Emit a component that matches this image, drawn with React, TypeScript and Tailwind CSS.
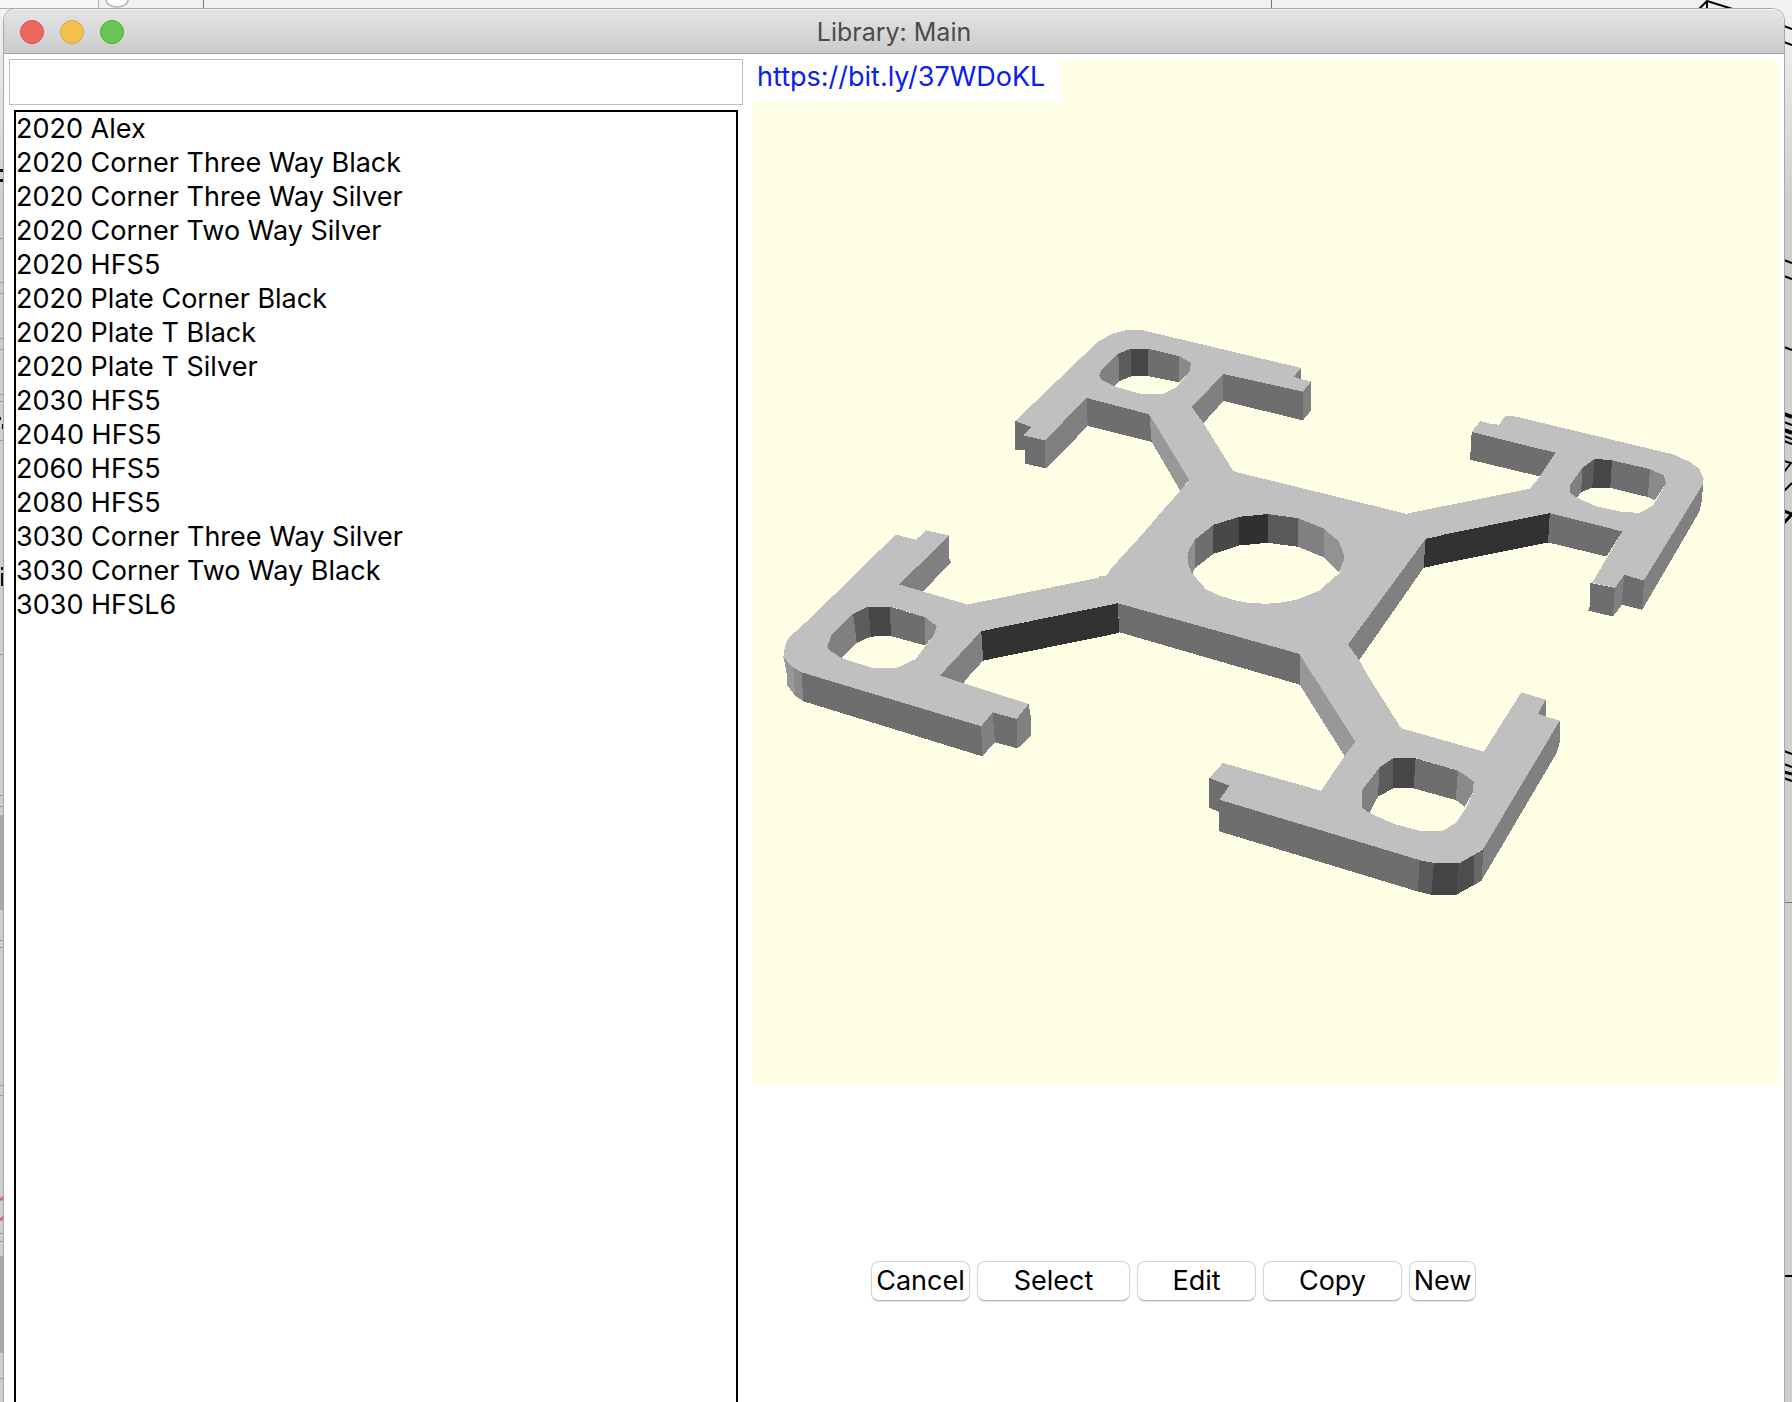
import React from "react";

const parts = [
  "2020 Alex",
  "2020 Corner Three Way Black",
  "2020 Corner Three Way Silver",
  "2020 Corner Two Way Silver",
  "2020 HFS5",
  "2020 Plate Corner Black",
  "2020 Plate T Black",
  "2020 Plate T Silver",
  "2030 HFS5",
  "2040 HFS5",
  "2060 HFS5",
  "2080 HFS5",
  "3030 Corner Three Way Silver",
  "3030 Corner Two Way Black",
  "3030 HFSL6",
];

type Face = [fill: string, points: string];

interface Section {
  name: string;
  transform: string;
  top: string;
  sides: Face[];
  hole: string;
  walls: Face[];
}

const sections: Section[] = [
  {
    name: "upper-left arm",
    transform: "translate(246 250) scale(0.33333)",
    top: "48,332 295,95 340,70 380,60 430,60 905,173 882,200 935,214 910,244 672,191 577,290 612,338 700,480 710,486 1020,564 1020,780 330,780 430,670 490,600 543,542 570,510 450,312 262,263 137,390 72,375 97,350",
    sides: [
      ["#808080", "905,173 905,206 882,200"],
      ["#6e6e6e", "672,191 910,244 910,330 672,272"],
      ["#808080", "910,244 935,214 935,300 910,330"],
      ["#808080", "672,191 672,272 612,338 577,290"],
      ["#6e6e6e", "48,332 97,350 72,375 137,390 137,473 78,460 78,420 48,418"],
      ["#808080", "137,390 262,263 265,347 143,473 137,473"],
      ["#6e6e6e", "262,263 450,312 457,395 265,347"],
      ["#989898", "450,312 570,507 543,542 457,395"],
    ],
    hole: "300,195 305,180 357,130 395,115 445,115 540,138 575,158 570,185 530,232 490,252 430,252 350,230 305,208",
    walls: [
      ["#808080", "300,195 305,180 357,130 360,212 345,228 305,208"],
      ["#5c5c5c", "357,130 395,115 397,198 360,212"],
      ["#464646", "395,115 445,115 445,197 395,198"],
      ["#6e6e6e", "445,115 540,138 540,216 445,197"],
      ["#8a8a8a", "540,138 575,158 570,185 540,216"],
    ],
  },
  {
    name: "upper-right arm",
    transform: "translate(686 330) scale(0.33333)",
    top: "-6,351 270,295 295,265 347,187 96,125 122,92 150,100 178,103 195,78 225,78 700,192 750,215 778,235 791,265 790,280 612,570 553,553 525,592 457,577 547,423 330,368 -6,436",
    sides: [
      ["#6e6e6e", "96,125 347,187 300,258 91,208"],
      ["#323232", "-6,436 330,368 325,456 -6,522"],
      ["#6e6e6e", "330,368 547,423 500,498 325,456"],
      ["#6e6e6e", "451,577 525,592 519,678 445,660 451,645"],
      ["#808080", "525,592 553,553 547,642 519,678"],
      ["#6e6e6e", "553,553 612,570 607,658 545,642"],
      ["#808080", "612,570 790,280 785,335 778,365 607,658"],
    ],
    hole: "390,285 428,232 465,205 515,210 630,236 672,255 678,280 640,345 600,367 550,365 470,348 412,322 392,308",
    walls: [
      ["#808080", "390,285 428,232 424,305 412,322 392,308"],
      ["#5c5c5c", "428,232 465,205 457,292 424,305"],
      ["#464646", "465,205 517,210 511,292 457,292"],
      ["#6e6e6e", "517,210 630,236 624,320 511,292"],
      ["#8a8a8a", "630,236 672,255 678,280 645,330 624,320"],
    ],
  },
  {
    name: "lower-left arm",
    transform: "translate(16 450) scale(0.33333)",
    top: "43,440 48,405 60,380 100,345 245,205 380,72 440,88 472,60 540,75 390,222 595,282 1010,197 1080,130 1080,287 1043,278 636,362 512,495 778,580 742,625 670,605 636,647 97,485 72,470",
    sides: [
      ["#808080", "540,75 540,145 545,155 460,245 390,222"],
      ["#989898", "43,440 72,468 78,555 55,525 52,480"],
      ["#8a8a8a", "72,468 97,485 103,572 78,555"],
      ["#6e6e6e", "97,485 636,647 639,737 103,572"],
      ["#808080", "636,647 670,605 677,695 639,737"],
      ["#6e6e6e", "670,605 742,625 745,713 677,695"],
      ["#808080", "742,625 778,580 785,620 785,675 745,713"],
      ["#808080", "512,495 636,362 642,450 600,495 580,521"],
      ["#323232", "636,362 1045,278 1050,367 642,450"],
    ],
    hole: "175,408 187,375 252,310 298,288 365,288 467,320 503,347 495,372 440,445 380,473 310,472 218,443 180,418",
    walls: [
      ["#808080", "175,408 187,375 252,310 263,397 218,443 180,418"],
      ["#5c5c5c", "252,310 298,288 305,378 263,397"],
      ["#464646", "298,288 362,288 366,377 305,378"],
      ["#6e6e6e", "362,288 467,320 470,405 366,377"],
      ["#8a8a8a", "467,320 503,347 495,372 468,405"],
    ],
  },
  {
    name: "lower-right arm",
    transform: "translate(436 610) scale(0.33333)",
    top: "330,-50 480,-70 508,-33 525,0 635,173 882,243 995,65 1068,87 1044,130 1110,150 880,535 852,553 810,577 720,575 690,568 90,387 120,345 60,322 100,277 395,360 465,256 497,213",
    sides: [
      ["#808080", "1068,87 1068,137 1044,130"],
      ["#808080", "1110,150 1110,215 1100,248 875,630 880,535"],
      ["#686868", "882,535 875,630 852,643 852,553"],
      ["#4e4e4e", "852,553 805,577 800,672 852,643"],
      ["#444444", "733,575 805,577 800,672 725,672"],
      ["#5a5a5a", "690,568 733,575 725,672 684,662"],
      ["#6e6e6e", "90,387 690,568 684,662 90,482"],
      ["#6e6e6e", "60,322 120,345 90,387 90,424 60,412"],
      ["#989898", "330,-54 340,-54 500,213 465,256 330,42"],
    ],
    hole: "516,360 570,290 610,263 680,263 805,300 852,332 850,365 830,410 800,455 760,480 690,480 615,460 540,427 516,410",
    walls: [
      ["#808080", "516,360 570,290 565,378 540,427 516,410"],
      ["#5c5c5c", "570,290 610,263 610,353 565,378"],
      ["#464646", "610,263 678,263 672,353 610,353"],
      ["#6e6e6e", "678,263 805,300 798,388 672,353"],
      ["#8a8a8a", "805,300 852,332 850,365 825,408 798,388"],
    ],
  },
  {
    name: "hub",
    transform: "translate(346 400) scale(0.33333)",
    top: "270,60 410,35 920,160 1026,138 1026,225 978,235 745,552 778,597 805,645 640,645 600,580 55,428 0,440 0,347 18,347",
    sides: [
      ["#808080", "978,235 972,322 778,600 745,552"],
      ["#323232", "978,235 1026,225 1026,310 972,322"],
      ["#6e6e6e", "55,428 600,580 600,672 60,515"],
    ],
    hole: "264,290 268,270 287,237 342,193 420,169 504,161 595,173 672,204 718,243 732,290 720,337 660,390 590,418 545,426 500,430 440,426 400,418 360,405 320,387 282,343",
    walls: [
      ["#8f8f8f", "264,290 268,270 287,237 288,320 278,342 266,310"],
      ["#6e6e6e", "287,237 342,193 342,280 288,322"],
      ["#484848", "342,193 420,169 420,255 342,280"],
      ["#303030", "420,169 504,161 504,247 420,255"],
      ["#5a5a5a", "504,161 595,173 595,259 504,247"],
      ["#808080", "595,173 672,204 672,290 595,259"],
      ["#929292", "672,204 718,243 732,280 732,300 718,337 672,290"],
    ],
  },
];

function Faces({ faces }: { faces: Face[] }) {
  return (
    <>
      {faces.map(([fill, points]) => (
        <polygon key={points} fill={fill} points={points} />
      ))}
    </>
  );
}

function PartPreview() {
  return (
    <svg
      viewBox="0 0 1024 1024"
      className="block w-full"
      shapeRendering="crispEdges"
      role="img"
      aria-label="Part preview"
    >
      {sections.map((s) => (
        <g key={s.name} transform={s.transform}>
          <Faces faces={s.sides} />
        </g>
      ))}
      {sections.map((s) => (
        <g key={s.name} transform={s.transform}>
          <polygon fill="#c0c0c0" points={s.top} />
        </g>
      ))}
      {sections.map((s) => (
        <g key={s.name} transform={s.transform}>
          <polygon fill="#ffffe6" points={s.hole} />
          <Faces faces={s.walls} />
        </g>
      ))}
    </svg>
  );
}

/* The application window that shows around the edges of the dialog. */
function Backdrop() {
  const leftRules = [238, 282, 293, 338, 349, 394, 401, 440, 654, 795, 806, 940, 947, 1085, 1095, 1233, 1241, 1378];
  return (
    <>
      <svg className="absolute top-0 left-0" width="1300" height="1402" aria-hidden="true">
        <rect width="98" height="8" fill="#f6f6f6" />
        <path d="M0 8.5H98.5V0" fill="none" stroke="#b0b0b0" />
        <path d="M106 0a11 7 0 0 0 22 0" fill="#fff" stroke="#b5b5b5" strokeWidth="1.5" />
        <path d="M203.5 0V10M1271.5 0V10" stroke="#777" />
        {leftRules.map((y) => (
          <path key={y} d={`M0 ${y}.5H4`} stroke="#9c9c9c" />
        ))}
        <rect y="815" width="4" height="95" fill="#a9a9a9" />
        <rect y="1256" width="4" height="97" fill="#a9a9a9" />
        <path d="M0 169h3v3H0zM0 179h3v3H0zM2 424h2v5H2zM0 417h1v3H0zM1 567h2v3H1zM1 573h2v13H1z" fill="#111" />
        <path d="M4 1197L0 1200M4 1217L0 1220" stroke="#c8716a" strokeWidth="3" />
      </svg>
      <svg className="absolute top-0 right-0" width="100" height="1402" aria-hidden="true">
        <g stroke="#000" strokeWidth="2" fill="none">
          <path d="M6 10L15 1L44 10M15 1V10" />
          <path d="M92 26L100 29M92 42L100 45M92 260L100 263M92 276L100 279M92 347L100 350" />
          <path d="M92 422L100 425M92 436L100 439M92 441L100 444M92 461L99 463L92 472M100 483L92 491" />
          <path d="M92 414L100 417M92 430L100 433" strokeWidth="4" />
          <path d="M92 511L100 514L92 523" strokeWidth="3" />
          <path d="M92 751L100 754M92 764L100 767M92 778L100 781M92 1276H100" />
          <path d="M92 772L100 774" strokeWidth="3" />
          <path d="M92 902.5H100" stroke="#777" strokeWidth="1" />
        </g>
      </svg>
    </>
  );
}

const lightClass = "size-6 rounded-full border";
const buttonClass =
  "h-10 rounded-lg border border-[#d4d4d4] border-b-[#b8b8b8] bg-white shadow-[0_1px_1px_rgba(0,0,0,0.12)]";

export default function App() {
  return (
    <div className="relative flex min-h-screen flex-col overflow-hidden bg-[linear-gradient(#f2f2f2_0px,#f0f0f0_20px,#cecece_200px)] pt-[9px] pr-2 pl-1 font-['Inter',sans-serif] text-[27px] leading-[34px] text-black">
      <Backdrop />
      <main className="relative flex flex-1 flex-col rounded-t-xl bg-white shadow-[0_0_0_1px_#a8a8a8]">
        <header className="relative flex h-[45px] items-center justify-center rounded-t-xl border-t border-b border-t-[#f5f5f5] border-b-[#a3a3a3] bg-linear-to-b from-[#e4e4e4] to-[#cbcbcb]">
          <div className="absolute left-4 flex gap-4">
            <button type="button" aria-label="Close" className={`${lightClass} border-[#d8504a] bg-[#ec695f]`} />
            <button type="button" aria-label="Minimize" className={`${lightClass} border-[#dba43c] bg-[#f5bf50]`} />
            <button type="button" aria-label="Zoom" className={`${lightClass} border-[#4eac3e] bg-[#66c756]`} />
          </div>
          <h1 className="pt-px text-[25px] text-[#4b4b4b]">Library: Main</h1>
        </header>

        <div className="grid flex-1 grid-cols-[734fr_1025fr] gap-[10px] pt-[5px] pr-[6px] pl-[5px]">
          <section className="flex min-w-0 flex-col gap-[5px]">
            <input
              type="text"
              aria-label="Filter parts"
              className="h-[46px] w-full border border-[#bdbdbd] bg-white px-2 outline-none"
            />
            <ul
              role="listbox"
              aria-label="Parts"
              className="mx-[5px] flex-1 border-2 border-b-0 border-black"
            >
              {parts.map((part) => (
                <li key={part} role="option" aria-selected={false}>
                  {part}
                </li>
              ))}
            </ul>
          </section>

          <section className="min-w-0 pt-px">
            <div className="relative bg-[#ffffe6]">
              <PartPreview />
              <a
                href="https://bit.ly/37WDoKL"
                className="absolute top-0 left-0 h-[42px] bg-white pr-4 pl-1 text-[#0a20f0]"
              >
                https://bit.ly/37WDoKL
              </a>
            </div>
            <div className="mt-44 ml-[118px] flex gap-[7px]">
              <button type="button" className={`${buttonClass} w-[99px]`}>Cancel</button>
              <button type="button" className={`${buttonClass} w-[153px]`}>Select</button>
              <button type="button" className={`${buttonClass} w-[119px]`}>Edit</button>
              <button type="button" className={`${buttonClass} w-[139px]`}>Copy</button>
              <button type="button" className={`${buttonClass} w-[67px]`}>New</button>
            </div>
          </section>
        </div>
      </main>
    </div>
  );
}
